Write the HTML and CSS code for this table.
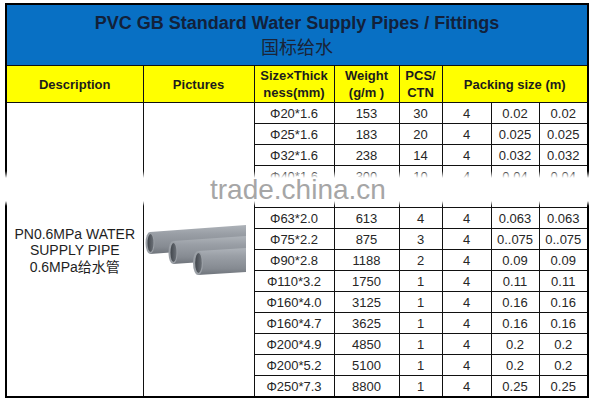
FILE: index.html
```html
<!DOCTYPE html>
<html>
<head>
<meta charset="utf-8">
<link rel="stylesheet" href="styles.css">
</head>
<body>
<div class="sheet">
<table class="spec">
<colgroup>
<col class="c-desc"><col class="c-pic"><col class="c-size"><col class="c-weight"><col class="c-pcs"><col class="c-p1"><col class="c-p2"><col class="c-p3">
</colgroup>
<thead>
<tr class="title-row"><th colspan="8"><div class="title-en">PVC GB Standard Water Supply Pipes / Fittings</div><div class="title-cn">国标给水</div></th></tr>
<tr class="head-row"><th>Description</th><th>Pictures</th><th>Size×Thick<br>ness(mm)</th><th>Weight<br>(g/m )</th><th>PCS/<br>CTN</th><th colspan="3">Packing size (m)</th></tr>
</thead>
<tbody>
<tr><td rowspan="14" class="desc">PN0.6MPa WATER<br>SUPPLY PIPE<br>0.6MPa给水管</td><td rowspan="14" class="pic"><svg class="pipes" width="101" height="56" viewBox="0 0 101 56">
<defs>
<linearGradient id="body" x1="0" y1="0" x2="0" y2="1">
<stop offset="0" stop-color="#aeb3b9"/><stop offset="0.3" stop-color="#9a9fa6"/><stop offset="0.75" stop-color="#868b92"/><stop offset="1" stop-color="#6f747b"/>
</linearGradient>
<linearGradient id="hole" x1="0" y1="0" x2="1" y2="0">
<stop offset="0" stop-color="#41464c"/><stop offset="1" stop-color="#6c7178"/>
</linearGradient>
</defs>
<path d="M5 9 L101 2 L101 24 L5 31 Z" fill="url(#body)"/>
<ellipse cx="5" cy="20" rx="4.5" ry="11" fill="#9ba0a6"/>
<ellipse cx="5.5" cy="20" rx="3" ry="9" fill="url(#hole)"/>
<path d="M28 18 L101 13 L101 36 L28 41 Z" fill="url(#body)"/>
<ellipse cx="28" cy="29.5" rx="4.5" ry="11.5" fill="#9ba0a6"/>
<ellipse cx="28.5" cy="29.5" rx="3" ry="9.5" fill="url(#hole)"/>
<path d="M53 28 L101 25 L101 49 L53 52 Z" fill="url(#body)"/>
<ellipse cx="53" cy="40" rx="5" ry="12" fill="#9ba0a6"/>
<ellipse cx="53.5" cy="40" rx="3.3" ry="10" fill="url(#hole)"/>
</svg></td><td>Φ20*1.6</td><td>153</td><td>30</td><td>4</td><td>0.02</td><td>0.02</td></tr>
<tr><td>Φ25*1.6</td><td>183</td><td>20</td><td>4</td><td>0.025</td><td>0.025</td></tr>
<tr><td>Φ32*1.6</td><td>238</td><td>14</td><td>4</td><td>0.032</td><td>0.032</td></tr>
<tr><td>Φ40*1.6</td><td>300</td><td>10</td><td>4</td><td>0.04</td><td>0.04</td></tr>
<tr><td></td><td></td><td></td><td></td><td></td><td></td></tr>
<tr><td>Φ63*2.0</td><td>613</td><td>4</td><td>4</td><td>0.063</td><td>0.063</td></tr>
<tr><td>Φ75*2.2</td><td>875</td><td>3</td><td>4</td><td>0..075</td><td>0..075</td></tr>
<tr><td>Φ90*2.8</td><td>1188</td><td>2</td><td>4</td><td>0.09</td><td>0.09</td></tr>
<tr><td>Φ110*3.2</td><td>1750</td><td>1</td><td>4</td><td>0.11</td><td>0.11</td></tr>
<tr><td>Φ160*4.0</td><td>3125</td><td>1</td><td>4</td><td>0.16</td><td>0.16</td></tr>
<tr><td>Φ160*4.7</td><td>3625</td><td>1</td><td>4</td><td>0.16</td><td>0.16</td></tr>
<tr><td>Φ200*4.9</td><td>4850</td><td>1</td><td>4</td><td>0.2</td><td>0.2</td></tr>
<tr><td>Φ200*5.2</td><td>5100</td><td>1</td><td>4</td><td>0.2</td><td>0.2</td></tr>
<tr><td>Φ250*7.3</td><td>8800</td><td>1</td><td>4</td><td>0.25</td><td>0.25</td></tr>
</tbody>
</table>
<div class="watermark-band"></div>
<div class="watermark">trade.china.cn</div>
</div>
</body>
</html>
```

FILE: styles.css
```css
html, body {
  margin: 0;
  padding: 0;
  background: #ffffff;
}
.sheet {
  position: relative;
  width: 596px;
  height: 401px;
  padding: 3px 0 0 5px;
  box-sizing: border-box;
  overflow: hidden;
  font-family: "Liberation Sans", Arial, "Noto Sans CJK SC", sans-serif;
}
.spec {
  border-collapse: collapse;
  table-layout: fixed;
  width: 582px;
  border: 2px solid #000;
}
.c-desc { width: 137px; }
.c-pic { width: 111px; }
.c-size { width: 80px; }
.c-weight { width: 65px; }
.c-pcs { width: 43px; }
.c-p1 { width: 49px; }
.c-p2 { width: 48px; }
.c-p3 { width: 49px; }
.spec th, .spec td {
  border: 1px solid #111;
  padding: 0;
  text-align: center;
  vertical-align: middle;
}
.title-row th {
  height: 60px;
  background: #0870c4;
  color: #12213a;
}
.title-en {
  font-size: 18px;
  font-weight: bold;
  line-height: 23px;
}
.title-cn {
  font-family: "Noto Sans CJK SC", sans-serif;
  font-size: 18px;
  font-weight: normal;
  line-height: 23px;
  color: #1a2438;
}
.head-row th {
  height: 36px;
  background: #ffff00;
  color: #1c1c1c;
  font-size: 13px;
  font-weight: bold;
  line-height: 17px;
}
.spec td {
  height: 20px;
  font-size: 13px;
  color: #262626;
  line-height: 15px;
}
.spec td.desc {
  font-size: 14px;
  line-height: 16.5px;
  color: #1e1e1e;
  padding-top: 2px;
}
.spec td.pic {
  text-align: left;
  padding-left: 1px;
  padding-top: 3px;
}
.pipes {
  display: block;
}
.watermark-band {
  position: absolute;
  left: 0;
  right: 0;
  top: 171px;
  height: 35px;
  background: linear-gradient(to bottom, rgba(255,255,255,0) 0, #ffffff 7px, #ffffff 30px, rgba(255,255,255,0) 35px);
}
.watermark {
  position: absolute;
  left: 210px;
  top: 176px;
  font-family: "Liberation Sans", Arial, sans-serif;
  font-size: 28px;
  line-height: 28px;
  color: #a6a6a6;
  white-space: nowrap;
}
```
